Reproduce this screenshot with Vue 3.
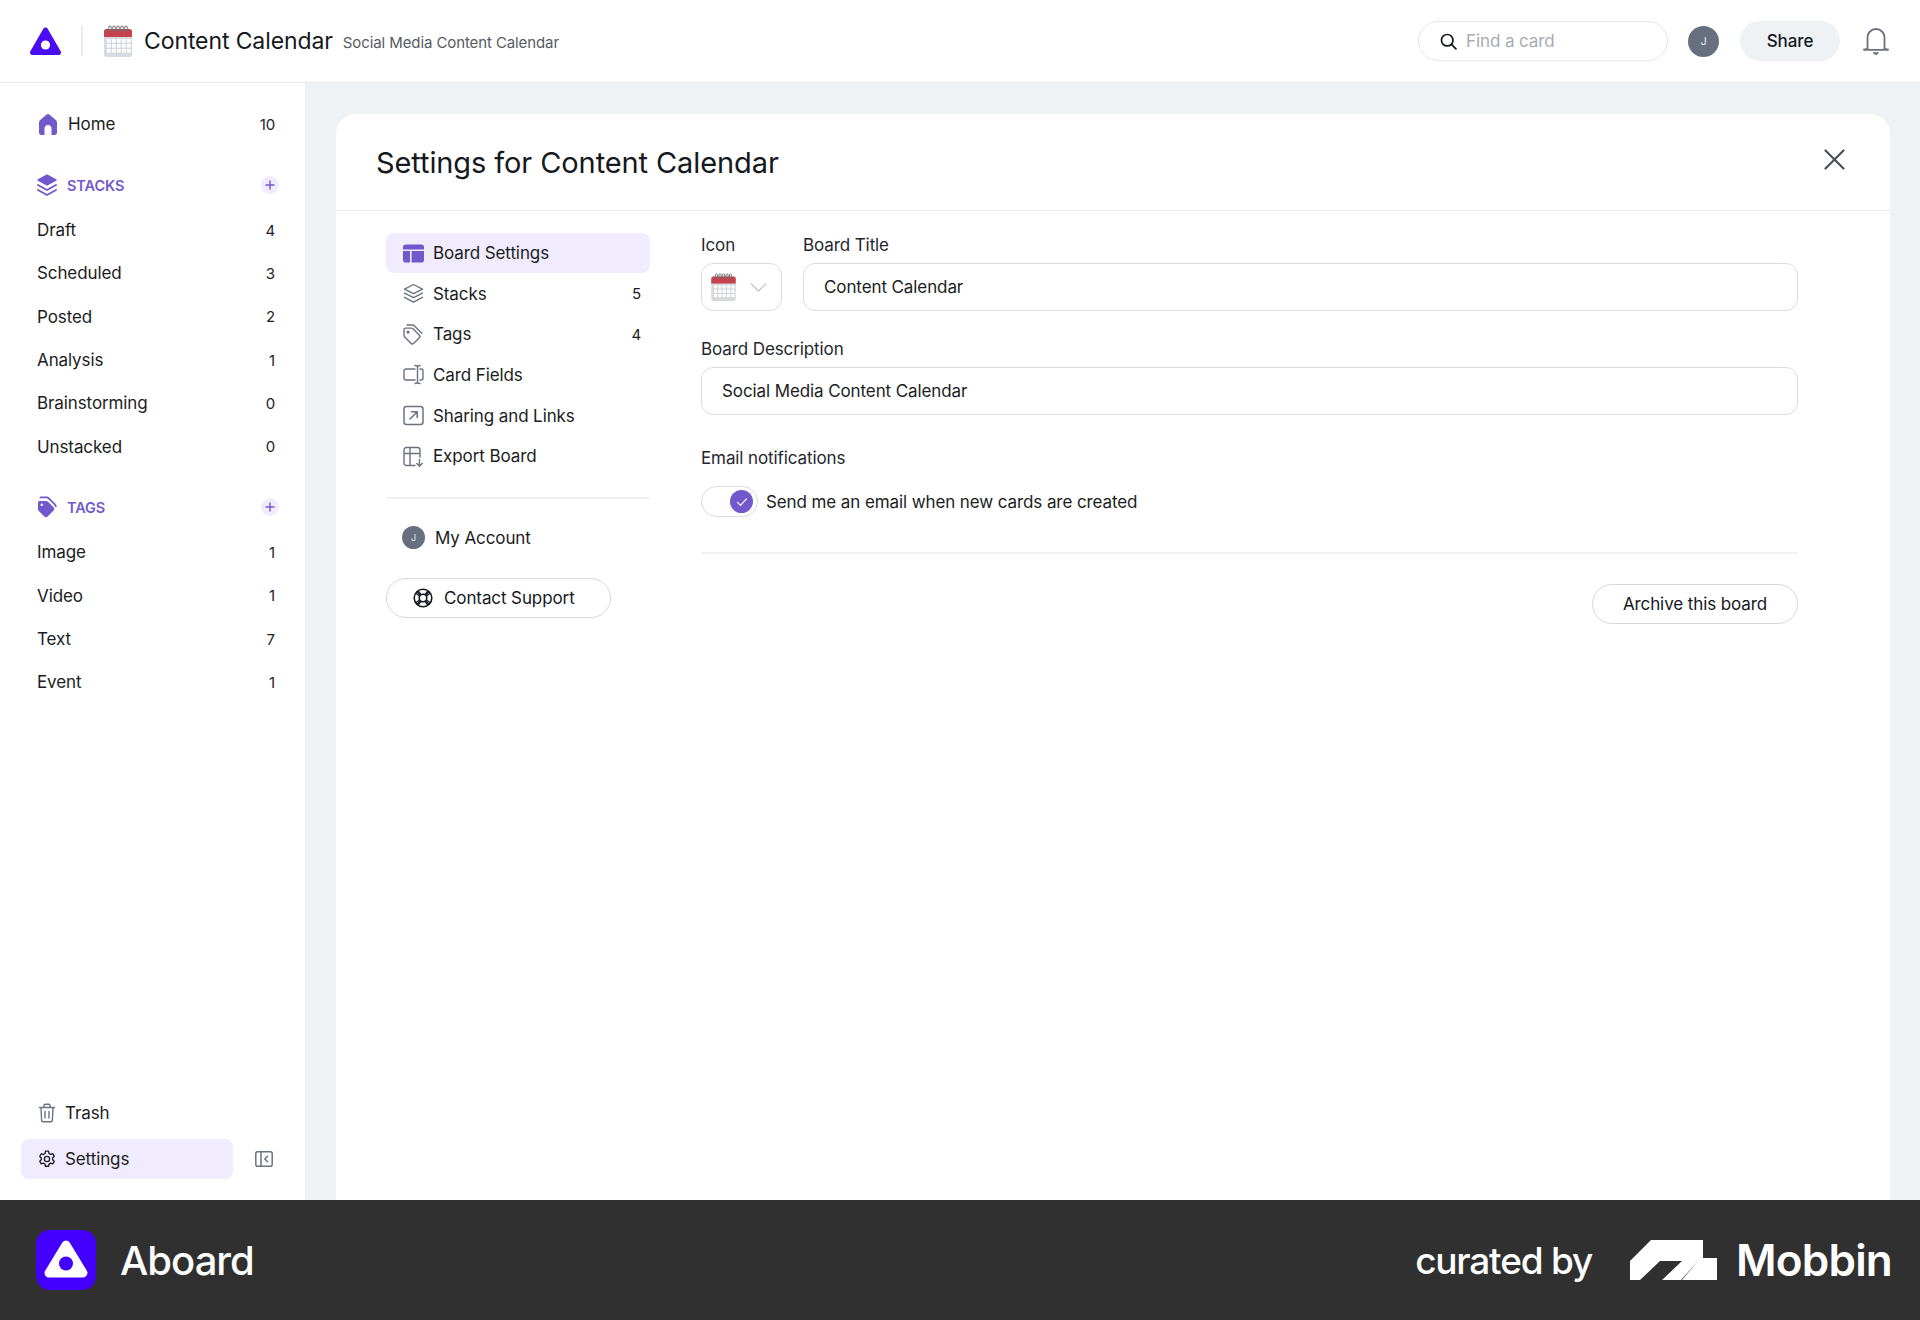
<template>
  <div class="app">
    <header class="topbar">
      <svg class="logo" viewBox="0 0 31 28"><path fill-rule="evenodd" fill="#4a0cf0" stroke="#4a0cf0" stroke-width="5" stroke-linejoin="round" d="M15.5 3 28.5 25.5H2.5z"/><circle cx="15.5" cy="18" r="4.6" fill="#fff"/></svg>
      <span class="vsep"></span>
      <svg class="cal cal-top" viewBox="0 0 28 32">
        <rect y="4" width="28" height="28" rx="2.5" fill="#d6dce1"/>
        <path d="M0 12V6.5A2.5 2.5 0 0 1 2.5 4h23A2.5 2.5 0 0 1 28 6.5V12z" fill="#c4434f"/>
        <g fill="none" stroke="#6d6a6c" stroke-width="1"><ellipse v-for="x in rings" :key="x" :cx="x" cy="3.5" rx="1.4" ry="2.6"/></g>
        <g fill="#fff"><template v-for="y in gridY" :key="y"><rect v-for="x in gridX" :key="x" :x="x" :y="y" width="3.6" height="3.6"/></template></g>
      </svg>
      <span class="board-name">Content Calendar</span>
      <span class="board-desc">Social Media Content Calendar</span>
      <div class="spacer"></div>
      <div class="search">
        <svg class="search-ic" viewBox="0 0 16 16" fill="none" stroke="#15181d" stroke-width="1.6" stroke-linecap="round"><circle cx="6.8" cy="6.8" r="5.4"/><path d="M10.8 10.8 15 15"/></svg>
        <span>Find a card</span>
      </div>
      <span class="avatar avatar-top">J</span>
      <span class="share">Share</span>
      <svg class="bell" viewBox="0 0 26 28" fill="none" stroke="#6a7280" stroke-width="1.8" stroke-linecap="round" stroke-linejoin="round"><path d="M4.5 21.5V10.5a8.5 8.5 0 0 1 17 0v11"/><path d="M1 22.5c2-.2 3.5-.5 3.5-1M25 22.5c-2-.2-3.5-.5-3.5-1M1 22.8h24"/><path d="M10.5 25.8h5l-2.5 2z" fill="#6a7280" stroke-width="1"/></svg>
    </header>

    <div class="main">
      <aside class="sidebar">
        <div class="row home-row">
          <svg class="ic-home" viewBox="0 0 18 21"><path fill="#7159cc" d="M7.6.6 1 6.2C.4 6.7 0 7.5 0 8.3v10.2C0 19.9 1.1 21 2.5 21h3v-6.5C5.5 12.6 7 11 9 11s3.5 1.6 3.5 3.5V21h3c1.4 0 2.5-1.1 2.5-2.5V8.3c0-.8-.4-1.6-1-2.1L10.4.6c-.8-.7-2-.7-2.8 0z"/></svg>
          <span class="grow">Home</span><span class="num">10</span>
        </div>

        <div class="section-head first-head">
          <svg class="ic-sec" viewBox="0 0 20 22"><path d="M10 1.2 18.8 6 10 10.8 1.2 6z" fill="#7159cc" stroke="#7159cc" stroke-width="1.6" stroke-linejoin="round"/><path d="M1 11 10 16 19 11M1 16 10 21 19 16" fill="none" stroke="#7159cc" stroke-width="1.9" stroke-linejoin="round" stroke-linecap="round"/></svg>
          <span class="grow sec-title">STACKS</span>
          <span class="plus"><svg viewBox="0 0 10 10" stroke="#7159cc" stroke-width="1.4" stroke-linecap="round"><path d="M5 1v8M1 5h8"/></svg></span>
        </div>
        <div class="list">
          <div v-for="s in stacks" :key="s[0]" class="row item"><span class="grow">{{ s[0] }}</span><span class="num">{{ s[1] }}</span></div>
        </div>

        <div class="section-head tags-head">
          <svg class="ic-sec" viewBox="0 0 20 22"><path d="M1 6.5V13c0 .8.3 1.4.8 1.9l5.6 5.6c.9.9 2.3.9 3.2 0l6-6c.9-.9.9-2.3 0-3.2L11 5.7c-.5-.5-1.1-.8-1.9-.8H2.6C1.7 4.9 1 5.6 1 6.5z" fill="#7159cc"/><circle cx="4.8" cy="8.8" r="1.2" fill="#fff"/><path d="M3.5 1.4h6.2c.8 0 1.4.3 1.9.8l6.2 6.2c.6.6 1 1.2 1 1.9" fill="none" stroke="#7159cc" stroke-width="1.8" stroke-linecap="round"/></svg>
          <span class="grow sec-title">TAGS</span>
          <span class="plus"><svg viewBox="0 0 10 10" stroke="#7159cc" stroke-width="1.4" stroke-linecap="round"><path d="M5 1v8M1 5h8"/></svg></span>
        </div>
        <div class="list">
          <div v-for="s in tags" :key="s[0]" class="row item"><span class="grow">{{ s[0] }}</span><span class="num">{{ s[1] }}</span></div>
        </div>

        <div class="side-bottom">
          <div class="bottom-row">
            <svg class="ic-bot" viewBox="0 0 18 20" fill="none" stroke="#6b7280" stroke-width="1.4" stroke-linecap="round" stroke-linejoin="round"><path d="M1.5 4.5h15M6 4.5V2.2c0-.6.5-1 1-1h4c.5 0 1 .4 1 1v2.3M3 4.5 3.6 17c0 1 .8 1.8 1.8 1.8h7.2c1 0 1.8-.8 1.8-1.8l.6-12.5M7 8.5v6.5M11 8.5v6.5"/></svg>
            <span>Trash</span>
          </div>
          <div class="bottom-wrap">
            <div class="bottom-row active">
              <svg class="ic-bot" viewBox="0 0 20 20" fill="none" stroke="#1d2026" stroke-width="1.5" stroke-linejoin="round"><path d="M8.3 1.3h3.4l.5 2.4 1.9 1.1 2.3-.8 1.7 3-1.8 1.6v2.2l1.8 1.6-1.7 3-2.3-.8-1.9 1.1-.5 2.4H8.3l-.5-2.4-1.9-1.1-2.3.8-1.7-3 1.8-1.6V8.8L1.9 7.2l1.7-3 2.3.8 1.9-1.1z"/><circle cx="10" cy="10" r="2.9"/></svg>
              <span>Settings</span>
            </div>
            <svg class="ic-collapse" viewBox="0 0 18 16" fill="none" stroke="#6b7280" stroke-width="1.5" stroke-linecap="round" stroke-linejoin="round"><rect x=".8" y=".8" width="16.4" height="14.4" rx="1.8"/><path d="M6 1v14M12.5 5.2 9.8 8l2.7 2.8"/></svg>
          </div>
        </div>
      </aside>

      <section class="content">
        <div class="card">
          <div class="card-head">
            <h1>Settings for Content Calendar</h1>
            <svg class="close" viewBox="0 0 21 21" stroke="#4b5058" stroke-width="2.2" stroke-linecap="round"><path d="M1.5 1.5 19.5 19.5M19.5 1.5 1.5 19.5"/></svg>
          </div>
          <div class="card-body">
            <nav class="snav">
              <div class="srow on">
                <svg class="sic" viewBox="0 0 21 18"><path fill="#7159cc" d="M2.8 0h15.4A2.8 2.8 0 0 1 21 2.8V5H0V2.8A2.8 2.8 0 0 1 2.8 0zM0 6.6h7V18H2.8A2.8 2.8 0 0 1 0 15.2zM8.6 6.6H21v8.6a2.8 2.8 0 0 1-2.8 2.8H8.6z"/></svg>
                <span class="grow">Board Settings</span>
              </div>
              <div class="srow">
                <svg class="sic" viewBox="0 0 21 20" fill="none" stroke="#6b7280" stroke-width="1.4" stroke-linejoin="round" stroke-linecap="round"><path d="M10.5 1 19.5 5.6 10.5 10.2 1.5 5.6z"/><path d="M1.5 9.6 10.5 14.2 19.5 9.6M1.5 13.8 10.5 18.6 19.5 13.8"/></svg>
                <span class="grow">Stacks</span><span class="snum">5</span>
              </div>
              <div class="srow">
                <svg class="sic" viewBox="0 0 21 21" fill="none" stroke="#6b7280" stroke-width="1.4" stroke-linejoin="round" stroke-linecap="round"><path d="M1 5.8v5.6c0 .7.3 1.2.7 1.7l6.2 6.2c.8.8 2.1.8 2.9 0l5.4-5.4c.8-.8.8-2.1 0-2.9L10 4.8c-.5-.4-1-.7-1.7-.7H2.7C1.8 4.1 1 4.9 1 5.8z"/><circle cx="5" cy="8.2" r=".9"/><path d="M4 1h5.6c.7 0 1.3.3 1.7.7l7.5 7.5"/></svg>
                <span class="grow">Tags</span><span class="snum">4</span>
              </div>
              <div class="srow">
                <svg class="sic" viewBox="0 0 21 21" fill="none" stroke="#6b7280" stroke-width="1.4" stroke-linejoin="round" stroke-linecap="round"><path d="M12 5H3C1.900 5 1 5.900 1 7v7c0 1.100.9 2 2 2h9M17 5h1c1.100 0 2 .9 2 2v7c0 1.100-.9 2-2 2h-1"/><path d="M12 1.500c1 0 2 .4 2.500 1 .5-.6 1.500-1 2.500-1M12 19.500c1 0 2-.4 2.500-1 .5.6 1.500 1 2.500 1M14.500 2.500v16"/></svg>
                <span class="grow">Card Fields</span>
              </div>
              <div class="srow">
                <svg class="sic" viewBox="0 0 21 21" fill="none" stroke="#6b7280" stroke-width="1.5" stroke-linejoin="round" stroke-linecap="round"><rect x="1" y="1.500" width="19" height="18" rx="2.500"/><path d="M7 14 14 7M8.500 6.800H14.200V12.500"/></svg>
                <span class="grow">Sharing and Links</span>
              </div>
              <div class="srow">
                <svg class="sic" viewBox="0 0 21 21" fill="none" stroke="#6b7280" stroke-width="1.4" stroke-linejoin="round" stroke-linecap="round"><path d="M12 19.500H3.500C2.100 19.500 1 18.400 1 17V4c0-1.400 1.100-2.500 2.500-2.500h11C15.900 1.500 17 2.600 17 4v7M1 7.500h16M7 1.500v18"/><path d="M16.500 13.500v6.500M13.800 17.500l2.700 2.700 2.700-2.700"/></svg>
                <span class="grow">Export Board</span>
              </div>
              <div class="snav-sep"></div>
              <div class="srow">
                <span class="avatar avatar-nav">J</span>
                <span class="grow">My Account</span>
              </div>
              <div class="support">
                <svg class="sup-ic" viewBox="0 0 20 20" fill="none" stroke="#15181d" stroke-width="1.6"><circle cx="10" cy="10" r="8.8"/><circle cx="10" cy="10" r="3.800"/><path d="M4 3.500 7.300 7.300M16 3.500 12.700 7.300M4 16.500 7.300 12.700M16 16.500 12.700 12.700M7 1.800l0 0M2 7l0 0"/><path d="M2.800 5.300 6.500 8M5.300 2.800 8 6.500M14.700 2.800 12 6.500M17.200 5.300 13.500 8M2.800 14.700 6.500 12M5.300 17.200 8 13.500M14.700 17.200 12 13.500M17.200 14.700 13.500 12" stroke-width="1.200"/></svg>
                <span>Contact Support</span>
              </div>
            </nav>

            <div class="form">
              <div class="form-top">
                <div class="field icon-field">
                  <label>Icon</label>
                  <div class="box icon-box">
                    <svg class="cal cal-form" viewBox="0 0 28 32">
                      <rect y="4" width="28" height="28" rx="2.5" fill="#d6d8da"/>
                      <path d="M0 12V6.500A2.500 2.500 0 0 1 2.500 4h23A2.500 2.500 0 0 1 28 6.500V12z" fill="#c4434f"/>
                      <g fill="none" stroke="#6d6a6c" stroke-width="1"><ellipse v-for="x in rings" :key="x" :cx="x" cy="3.500" rx="1.400" ry="2.600"/></g>
                      <g fill="#fff"><template v-for="y in gridY" :key="y"><rect v-for="x in gridX" :key="x" :x="x" :y="y" width="3.600" height="3.600"/></template></g>
                    </svg>
                    <svg class="chev" viewBox="0 0 18 10" fill="none" stroke="#c3c7cc" stroke-width="1.500" stroke-linecap="round" stroke-linejoin="round"><path d="M1 1 9 9 17 1"/></svg>
                  </div>
                </div>
                <div class="field title-field">
                  <label>Board Title</label>
                  <div class="box text-box">Content Calendar</div>
                </div>
              </div>
              <div class="field desc-field">
                <label>Board Description</label>
                <div class="box text-box">Social Media Content Calendar</div>
              </div>
              <div class="field email-field">
                <label>Email notifications</label>
                <div class="toggle-row">
                  <span class="toggle"><span class="thumb"><svg viewBox="0 0 12 10" fill="none" stroke="#fff" stroke-width="1.200" stroke-linecap="round" stroke-linejoin="round"><path d="M1.500 5.300 4.500 8.300 10.500 1.800"/></svg></span></span>
                  <span>Send me an email when new cards are created</span>
                </div>
              </div>
              <div class="form-sep"></div>
              <div class="archive-row"><span class="archive">Archive this board</span></div>
            </div>
          </div>
        </div>
      </section>
    </div>

    <footer class="footer">
      <svg class="foot-logo" viewBox="0 0 60 60"><rect width="60" height="60" rx="14" fill="#4400ff"/><path d="M30 15 47 43H13z" fill="#fff" stroke="#fff" stroke-width="9" stroke-linejoin="round"/><circle cx="30" cy="33.500" r="7" fill="#4400ff"/></svg>
      <span class="foot-name">Aboard</span>
      <div class="spacer"></div>
      <span class="curated">curated by</span>
      <svg class="mobbin-mark" viewBox="0 0 87 40"><path fill="#fff" d="M0 21 21 0H40V0L60 0 73 0V18H87V40H53L53 40H52L68 21 51 40H32L32 40 52 21 46 21 30 21 10 40H0z"/></svg>
      <span class="mobbin">Mobbin</span>
    </footer>
  </div>
</template>

<script setup>
const stacks = [['Draft', 4], ['Scheduled', 3], ['Posted', 2], ['Analysis', 1], ['Brainstorming', 0], ['Unstacked', 0]]
const tags = [['Image', 1], ['Video', 1], ['Text', 7], ['Event', 1]]
const rings = [6, 10, 14, 18, 22]
const gridX = [3.5, 8.5, 13.5, 18.5, 23.5].map(x => x - 0.5)
const gridY = [14, 19, 24]
</script>

<style>
html, body { margin: 0; background: #fff; }
</style>

<style scoped>
.app { width: 1920px; height: 1320px; display: flex; flex-direction: column; font-family: Inter, "Liberation Sans", sans-serif; font-size: 17px; color: #1a1d22; overflow: hidden; letter-spacing: -0.1px; }
.spacer, .grow { flex: 1; }

.topbar { height: 83px; box-sizing: border-box; flex: none; display: flex; align-items: center; border-bottom: 1px solid #e6e9eb; padding: 0 31px 0 30px; background: #fff; }
.logo { width: 31px; height: 28px; flex: none; }
.vsep { width: 2px; height: 30px; background: #e8eaec; margin: 0 21px 0 20px; flex: none; }
.cal-top { width: 28px; height: 32px; flex: none; margin-right: 12px; }
.board-name { font-size: 23px; color: #15181d; }
.board-desc { font-size: 15px; color: #565b63; margin-left: 10px; margin-top: 3px; }
.search { width: 250px; height: 40px; box-sizing: border-box; border: 1px solid #e4e6e9; border-radius: 20px; display: flex; align-items: center; padding-left: 21px; gap: 9px; color: #a7abb3; font-size: 17px; flex: none; }
.search-ic { width: 17px; height: 17px; flex: none; }
.avatar { border-radius: 50%; background: #667080; color: #e6e8ec; display: flex; align-items: center; justify-content: center; flex: none; }
.avatar-top { width: 31px; height: 31px; font-size: 11px; margin-left: 20px; }
.share { width: 100px; height: 40px; border-radius: 20px; background: #eff2f4; margin-left: 21px; display: flex; align-items: center; justify-content: center; font-weight: 500; flex: none; color: #15181d; }
.bell { width: 26px; height: 28px; margin-left: 23px; flex: none; }

.main { flex: 1; min-height: 0; display: flex; }
.sidebar { width: 305px; box-sizing: border-box; flex: none; background: #fff; display: flex; flex-direction: column; padding: 21px 30px 21px 37px; }
.row { display: flex; align-items: center; }
.home-row { height: 40px; flex: none; }
.ic-home { width: 18px; height: 21px; margin: 0 11px 0 2px; flex: none; }
.num { font-size: 15px; color: #1f2228; }
.section-head { height: 40px; display: flex; align-items: center; flex: none; }
.first-head { margin-top: 21px; }
.tags-head { margin-top: 19px; }
.ic-sec { width: 20px; height: 22px; margin-right: 10px; flex: none; }
.sec-title { font-size: 14.5px; font-weight: 600; color: #7159cc; letter-spacing: -0.1px; }
.plus { width: 18px; height: 18px; border-radius: 50%; background: #f1ecfd; display: flex; align-items: center; justify-content: center; margin-right: -4px; }
.plus svg { width: 10px; height: 10px; }
.list { margin-top: 3.5px; }
.item { height: 43.3px; }
.side-bottom { margin-top: auto; margin-left: -16px; margin-right: -8px; display: flex; flex-direction: column; gap: 6px; }
.bottom-row { height: 40px; display: flex; align-items: center; gap: 9px; padding-left: 17px; box-sizing: border-box; }
.bottom-wrap { display: flex; align-items: center; }
.active { width: 212px; background: #f1ecfd; border-radius: 8px; flex: none; }
.ic-bot { width: 18px; height: 20px; flex: none; }
.ic-collapse { width: 18px; height: 16px; margin-left: 22px; flex: none; }

.content { flex: 1; background: #eff2f4; padding: 31px 30px 0 31px; display: flex; min-width: 0; }
.card { flex: 1; background: #fff; border-radius: 20px 20px 0 0; display: flex; flex-direction: column; }
.card-head { height: 97px; box-sizing: border-box; flex: none; border-bottom: 1px solid #e9ebed; display: flex; align-items: center; justify-content: space-between; padding: 0 45px 0 40px; }
h1 { font-size: 29px; font-weight: 400; margin: 0; color: #15181d; letter-spacing: -0.1px; }
.close { width: 21px; height: 21px; margin-top: -5px; }
.card-body { flex: 1; display: flex; padding: 22px 92px 0 50px; gap: 51px; }
.snav { width: 264px; flex: none; display: flex; flex-direction: column; gap: 0.67px; }
.srow { height: 40px; display: flex; align-items: center; padding: 0 9px 0 17px; gap: 9px; border-radius: 8px; flex: none; }
.on { background: #f1ecfd; }
.sic { width: 21px; height: 21px; flex: none; }
.snum { font-size: 15px; }
.snav-sep { height: 2px; background: #eff0f2; margin: 20px 0 18px; flex: none; }
.avatar-nav { width: 23px; height: 23px; font-size: 9px; margin-left: -1px; margin-right: 1px; }
.support { height: 40px; width: 225px; box-sizing: border-box; border: 1.5px solid #d6d8dc; border-radius: 20px; margin-top: 20px; display: flex; align-items: center; padding-left: 26px; gap: 11px; flex: none; color: #15181d; }
.sup-ic { width: 20px; height: 20px; flex: none; }

.form { flex: 1; min-width: 0; display: flex; flex-direction: column; }
.form-top { display: flex; gap: 21px; }
.field { display: flex; flex-direction: column; }
label { height: 24px; line-height: 24px; margin-bottom: 6px; color: #24272c; display: block; }
.icon-field { width: 81px; flex: none; }
.title-field { flex: 1; }
.box { height: 48px; box-sizing: border-box; border: 1.5px solid #d9dce4; border-radius: 12px; display: flex; align-items: center; }
.icon-box { padding-left: 9px; gap: 14px; }
.cal-form { width: 25px; height: 28px; flex: none; }
.chev { width: 17px; height: 9px; flex: none; }
.text-box { padding-left: 20px; color: #1a1d22; }
.desc-field { margin-top: 26px; }
.email-field { margin-top: 31px; }
.email-field label { margin-bottom: 16px; }
.toggle-row { display: flex; align-items: center; gap: 8px; }
.toggle { width: 57px; height: 31px; box-sizing: border-box; border: 1.5px solid #d9dce0; border-radius: 16px; display: flex; align-items: center; justify-content: flex-end; padding-right: 4px; flex: none; }
.thumb { width: 23px; height: 23px; border-radius: 50%; background: #7159cc; display: flex; align-items: center; justify-content: center; }
.thumb svg { width: 12px; height: 10px; }
.form-sep { height: 2px; background: #f0f1f3; margin-top: 35px; flex: none; }
.archive-row { display: flex; justify-content: flex-end; margin-top: 30px; }
.archive { height: 40px; width: 206px; box-sizing: border-box; border: 1.5px solid #d6d8dc; border-radius: 20px; display: flex; align-items: center; justify-content: center; color: #15181d; }

.footer { height: 120px; flex: none; background: #303030; display: flex; align-items: center; padding: 0 28px 0 36px; color: #fff; letter-spacing: 0; }
.foot-logo { width: 60px; height: 60px; flex: none; }
.foot-name { font-size: 40px; font-weight: 500; margin-left: 24px; letter-spacing: -1px; }
.curated { font-size: 37px; font-weight: 500; letter-spacing: -1.2px; }
.mobbin-mark { width: 87px; height: 40px; margin-left: 38px; flex: none; }
.mobbin { font-size: 44px; font-weight: 600; margin-left: 19px; letter-spacing: -0.8px; }
</style>
